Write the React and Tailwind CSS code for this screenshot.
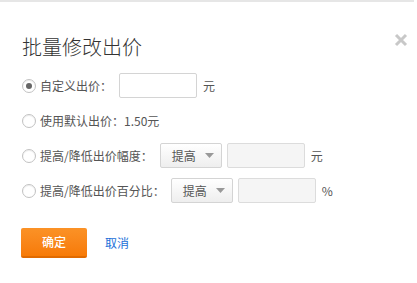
import { useState } from 'react';

const font = { fontFamily: '"Noto Sans CJK SC", "Liberation Sans", sans-serif' };

function Radio({ checked }) {
  return (
    <span className="w-[14px] h-[14px] rounded-full border border-[#c2c2c2] bg-white flex items-center justify-center shrink-0 shadow-[inset_0_1px_1px_rgba(0,0,0,0.08)]">
      {checked && <span className="w-[6px] h-[6px] rounded-full bg-[#666]" />}
    </span>
  );
}

function Select() {
  return (
    <div className="w-[62px] h-[25px] border border-[#d4d4d4] rounded-[2px] bg-gradient-to-b from-white to-[#eeeeee] flex items-center justify-between pl-[11px] pr-[7px] text-[#555]">
      <span>提高</span>
      <svg width="9" height="5" viewBox="0 0 9 5"><path d="M0 0h9L4.5 5z" fill="#999" /></svg>
    </div>
  );
}

export default function App() {
  const [mode, setMode] = useState(0);

  return (
    <div className="w-[417px] h-[283px] bg-white relative text-[12px] text-[#444]" style={font}>
      <div className="w-[414px] h-[2px] bg-[#e6e6e6]" />

      <button className="absolute right-[9px] top-[33px] w-[14px] h-[14px]">
        <svg width="14" height="14" viewBox="0 0 14 14">
          <path d="M2 2L12 12M12 2L2 12" stroke="#c8c8c8" strokeWidth="3" />
        </svg>
      </button>

      <div className="pl-[22px] pt-[31px]">
        <h1 className="text-[20px] leading-[28px] font-light text-[#333]">批量修改出价</h1>

        <div className="mt-[12px] flex flex-col gap-[10px]">
          <label className="h-[25px] flex items-center" onClick={() => setMode(0)}>
            <Radio checked={mode === 0} />
            <span className="ml-[4px] text-[#555]">自定义出价：</span>
            <input className="ml-[7px] w-[78px] h-[25px] border border-[#d4d4d4] rounded-[2px] bg-white outline-none px-1" />
            <span className="ml-[6px] text-[#555]">元</span>
          </label>

          <label className="h-[25px] flex items-center" onClick={() => setMode(1)}>
            <Radio checked={mode === 1} />
            <span className="ml-[4px] text-[#555]">使用默认出价：1.50元</span>
          </label>

          <label className="h-[25px] flex items-center" onClick={() => setMode(2)}>
            <Radio checked={mode === 2} />
            <span className="ml-[4px] text-[#555]">提高/降低出价幅度：</span>
            <div className="ml-[7px]"><Select /></div>
            <input disabled className="ml-[5px] w-[78px] h-[25px] border border-[#dcdcdc] rounded-[2px] bg-[#f5f5f5] outline-none" />
            <span className="ml-[6px] text-[#555]">元</span>
          </label>

          <label className="h-[25px] flex items-center" onClick={() => setMode(3)}>
            <Radio checked={mode === 3} />
            <span className="ml-[4px] text-[#555]">提高/降低出价百分比：</span>
            <div className="ml-[6px]"><Select /></div>
            <input disabled className="ml-[5px] w-[78px] h-[25px] border border-[#dcdcdc] rounded-[2px] bg-[#f5f5f5] outline-none" />
            <span className="ml-[6px] text-[#555]">%</span>
          </label>
        </div>

        <div className="mt-[25px] flex items-center">
          <button className="-ml-[1px] w-[66px] h-[30px] rounded-[2px] bg-gradient-to-b from-[#fb9226] to-[#f77a05] border-b-2 border-[#e06a00] text-white font-medium">确定</button>
          <a href="#" className="ml-[18px] text-[#1a6fd8]">取消</a>
        </div>
      </div>
    </div>
  );
}
